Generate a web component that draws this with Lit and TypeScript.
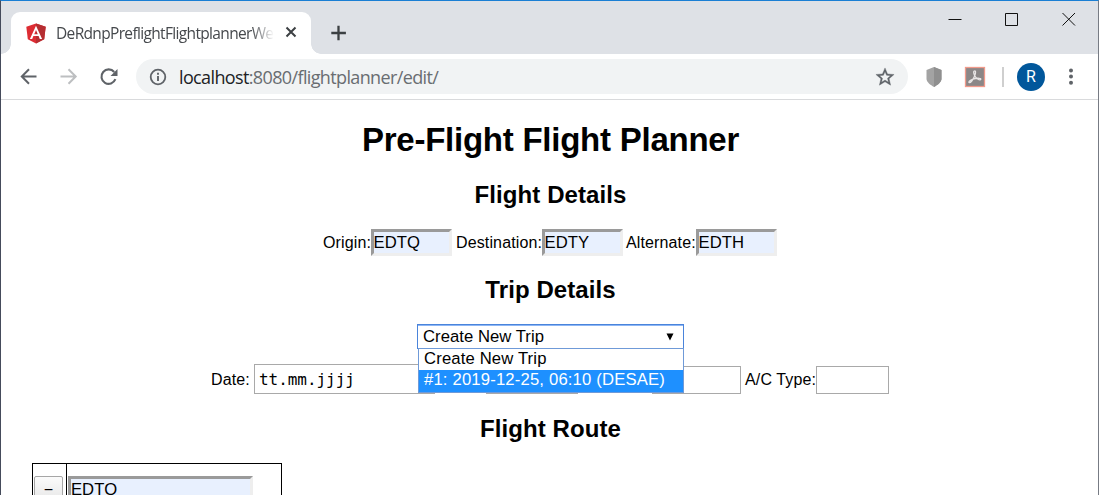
import { LitElement, html, css } from "lit";
import { customElement } from "lit/decorators.js";

@customElement("browser-chrome")
class BrowserChrome extends LitElement {
  static styles = css`
    :host { display: block; font-family: "Open Sans", sans-serif; }
    svg { display: block; flex: none; }
    .strip { height: 42px; padding-top: 11px; background: #dee1e6; display: flex; align-items: flex-start; }
    .tab { position: relative; margin-left: 10px; width: 300px; height: 42px; box-sizing: border-box; background: #fff; border-radius: 9px 9px 0 0; display: flex; align-items: center; padding-left: 15px; }
    .tab::before, .tab::after { content: ""; position: absolute; bottom: 0; width: 10px; height: 10px; }
    .tab::before { left: -10px; background: radial-gradient(circle at 0 0, transparent 9.5px, #fff 10px); }
    .tab::after { right: -10px; background: radial-gradient(circle at 100% 0, transparent 9.5px, #fff 10px); }
    .title { margin-left: 10px; width: 218px; font-size: 15.5px; line-height: 20px; white-space: nowrap; overflow: hidden; color: #45484c; letter-spacing: -0.66px; -webkit-mask-image: linear-gradient(90deg, #000 195px, transparent 218px); }
    .close { margin: -2px 0 0 11px; }
    .plus { margin: 13px 0 0 20px; }
    .window { margin: -1px 22px 0 auto; }
    .bar { height: 45px; display: flex; align-items: center; border-bottom: 1px solid #d9dadc; }
    .nav { margin-left: 18px; }
    .omni { margin-left: 16px; width: 772px; height: 35px; border-radius: 18px; background: #f1f3f4; display: flex; align-items: center; box-sizing: border-box; padding: 0 13px; }
    .url { margin-left: 12px; flex: 1; font-size: 18px; line-height: 24px; color: #696d71; letter-spacing: -0.63px; white-space: nowrap; }
    .host { color: #202124; }
    .shield { margin-left: 17px; }
    .pdf { margin-left: 21px; }
    .divider { margin-left: 16px; }
    .avatar { width: 28px; height: 28px; border-radius: 50%; background: #01579b; color: #fff; font: 16px/28px Roboto, sans-serif; text-align: center; margin-left: 13px; }
    .menu { margin-left: 22px; }
  `;
  render() {
    return html`
      <div class="strip">
        <div class="tab">
          <svg width="20" height="21" viewBox="0 0 20 21"><path fill="#dd2c33" d="M10 .4 19.7 3.8 18.2 16.2 10 20.6 1.8 16.2.3 3.8z"/><path fill="#b52e31" d="M10 .4 19.7 3.8 18.2 16.2 10 20.6z"/><path fill="#fff" fill-rule="evenodd" d="M10 2.7 3.9 16h2.3l1.2-3h5.2l1.2 3h2.3zm0 4.4 1.8 4.1H8.2z"/></svg>
          <div class="title">DeRdnpPreflightFlightplannerWebapp</div>
          <svg class="close" width="12" height="12" viewBox="0 0 12 12"><path d="m1.5 1.5 9 9m0-9-9 9" stroke="#3c4043" stroke-width="2"/></svg>
        </div>
        <svg class="plus" width="16" height="16" viewBox="0 0 16 16"><path d="M7.500 .7v14.600M.3 8h14.600" stroke="#3c4043" stroke-width="2.3"/></svg>
        <svg class="window" width="128" height="16" viewBox="0 0 128 16"><path d="M.5 8.500h13M57.500 2.500h12v12h-12zM114.500 2l12.500 12.500m0-12.500L114.500 14.500" fill="none" stroke="#111" stroke-width="1"/></svg>
      </div>
      <div class="bar">
        <svg class="nav" width="101" height="20" viewBox="0 0 101 20" fill="none" stroke-width="2"><path stroke="#5f6368" d="M17.500 9.500H2.500m7.500-7.200L2.800 9.500l7.200 7.200"/><path stroke="#bdbfc1" d="M41.500 9.500h15M49.500 2.300l7.200 7.200-7.200 7.200"/><path stroke="#5f6368" stroke-width="2.100" d="M95.200 5A7.200 7.200 0 1 0 96.400 12.200"/><path fill="#5f6368" d="M98.500 2v7h-7z"/></svg>
        <div class="omni">
          <svg width="18" height="18" viewBox="0 0 18 18"><circle cx="9" cy="9" r="7.3" fill="none" stroke="#5f6368" stroke-width="1.8"/><path d="M9 8v5M9 4.8v1.9" stroke="#5f6368" stroke-width="1.9"/></svg>
          <div class="url"><span class="host">localhost</span>:8080/flightplanner/edit/</div>
          <svg width="20" height="20" viewBox="1 1 22 22"><path fill="#5f6368" stroke="#5f6368" stroke-width=".4" d="m22 9.24-7.190-.62L12 2 9.190 8.630 2 9.240l5.460 4.730L5.820 21 12 17.270 18.180 21l-1.630-7.030zM12 15.400l-3.760 2.270 1-4.280-3.320-2.880 4.380-.38L12 6.100l1.710 4.040 4.380.38-3.320 2.880 1 4.280z"/></svg>
        </div>
        <svg class="shield" width="18" height="20" viewBox="0 0 18 20"><path fill="#a3a3a3" d="M9 0 16.500 3v9c0 3-4 6-7.500 8C5.500 18 1.500 15 1.500 12V3z"/><path fill="#8f8f8f" d="M9 0 16.500 3v9c0 3-4 6-7.500 8z"/></svg>
        <svg class="pdf" width="22" height="22" viewBox="0 0 22 22"><rect x="1.500" y="1.500" width="19" height="19" fill="#8b8787" stroke="#f19a8b" stroke-width="1.300"/><path d="M10 5.200c2-1.500 2 2 .4 5.200C9 13.500 6.500 17.500 5 16.500c-1-1.500 4-3.500 6.500-4 2.500-.5 5.500-.3 5.300.8-.5 1.800-4.800-.8-6.200-3.800C9.700 7.500 9.400 5.900 10 5.200z" fill="none" stroke="#e8e5e5" stroke-width="1.300"/></svg>
        <svg class="divider" width="2" height="20" viewBox="0 0 2 20"><path fill="#cfcfcf" d="M0 0h2v20H0z"/></svg>
        <div class="avatar">R</div>
        <svg class="menu" width="8" height="18" viewBox="0 0 8 18" fill="#5f6368"><circle cx="4" cy="2.500" r="2"/><circle cx="4" cy="8.500" r="2"/><circle cx="4" cy="14.700" r="2"/></svg>
      </div>`;
  }
}

@customElement("planner-page")
class PlannerPage extends LitElement {
  static styles = css`
    :host { display: block; font: 16px/18px "Liberation Sans", sans-serif; color: #000; }
    h1, h2 { margin: 0; text-align: center; font-weight: bold; white-space: nowrap; padding-left: 2px; }
    h1 { font-size: 33px; line-height: 36px; padding-top: 22px; letter-spacing: -0.24px; }
    h2 { font-size: 24px; line-height: 28px; letter-spacing: 0.08px; }
    .details { padding-top: 23px; }
    .trip { padding-top: 20px; }
    .route { padding-top: 21px; }
    .row { display: flex; white-space: nowrap; }
    .first { padding: 20px 0 0 322px; align-items: center; }
    .label { letter-spacing: 0.13px; }
    .origin { width: 48px; }
    .dest { width: 86px; margin-left: 4px; }
    .alt { width: 70px; margin-left: 3px; }
    .inset { box-sizing: border-box; width: 81px; height: 27px; border: 3px solid; border-color: #9a9a9a #eee #eee #9a9a9a; background: #e8f0fe; line-height: 21px; font-size: 16.67px; text-indent: -0.4px; }
    .second { position: relative; padding: 20px 0 0 416px; }
    .select { box-sizing: border-box; width: 267px; height: 25px; border: 1px solid #4a84db; box-shadow: inset 0 1px #8db6f5; background: #fff; display: flex; justify-content: space-between; align-items: center; padding: 0 8px 0 5px; font-size: 16.67px; letter-spacing: 0.04px; }
    .list { position: absolute; z-index: 1; left: 417px; top: 44px; width: 266px; height: 45px; box-sizing: border-box; border: 1px solid #6f9ad8; background: #fff; font-size: 16.67px; letter-spacing: 0.15px; }
    .option { padding-left: 5px; height: 21px; line-height: 20px; }
    .on { background: #1e90ff; color: #fff; height: 22px; line-height: 20px; letter-spacing: 0.17px; }
    .third { padding: 15px 0 0 210px; height: 30px; align-items: flex-end; }
    .field { box-sizing: border-box; height: 28px; border: 1px solid #a9a9a9; background: #fff; }
    .date { height: 30px; width: 181px; margin-left: 5px; padding-left: 4px; font: 16px/30px "DejaVu Sans Mono", monospace; letter-spacing: -0.05px; }
    .time { width: 92px; margin-left: 51px; }
    .reg { width: 89px; margin-left: 74px; }
    .actype { width: 73px; }
    .text { line-height: 31px; height: 30px; }
    .fd { width: 38px; }
    .ac { width: 71px; margin-left: 4px; }
    .table { display: flex; margin: 20px 0 0 31px; width: 250px; height: 60px; box-sizing: border-box; border: 1px solid #000; }
    .cell { padding: 12px 1px 0; }
    .rm { border-right: 1px solid #000; width: 31px; }
    .button { box-sizing: border-box; width: 29px; height: 27px; border: 1px solid #a6a6a6; border-radius: 2px; background: linear-gradient(#fbfbfb, #e6e6e6); text-align: center; line-height: 25px; }
    .wide { width: 185px; text-indent: 0; }
  `;
  render() {
    return html`
      <h1>Pre-Flight Flight Planner</h1>
      <h2 class="details">Flight Details</h2>
      <div class="row first">
        <div class="label origin">Origin:</div><div class="inset">EDTQ</div>
        <div class="label dest">Destination:</div><div class="inset">EDTY</div>
        <div class="label alt">Alternate:</div><div class="inset">EDTH</div>
      </div>
      <h2 class="trip">Trip Details</h2>
      <div class="second">
        <div class="select"><span>Create New Trip</span><svg width="10" height="10" viewBox="0 0 10 10"><path d="M1.500 1.500h7L5 8.500z"/></svg></div>
        <div class="list"><div class="option">Create New Trip</div><div class="option on">#1: 2019-12-25, 06:10 (DESAE)</div></div>
      </div>
      <div class="row third">
        <div class="label text fd">Date:</div><div class="field date">tt.mm.jjjj</div>
        <div class="field time"></div>
        <div class="field reg"></div>
        <div class="label text ac">A/C Type:</div><div class="field actype"></div>
      </div>
      <h2 class="route">Flight Route</h2>
      <div class="table">
        <div class="cell rm"><div class="button">−</div></div>
        <div class="cell"><div class="inset wide">EDTQ</div></div>
      </div>`;
  }
}

@customElement("app-root")
class AppRoot extends LitElement {
  static styles = css`
    :host { display: block; box-sizing: border-box; width: 1099px; height: 495px; overflow: hidden; background: #fff; border-top: 1px solid #1a7fd4; border-left: 1px solid #454b5b; border-right: 1px solid #777b84; }
  `;
  render() {
    return html`<browser-chrome></browser-chrome><planner-page></planner-page>`;
  }
}
